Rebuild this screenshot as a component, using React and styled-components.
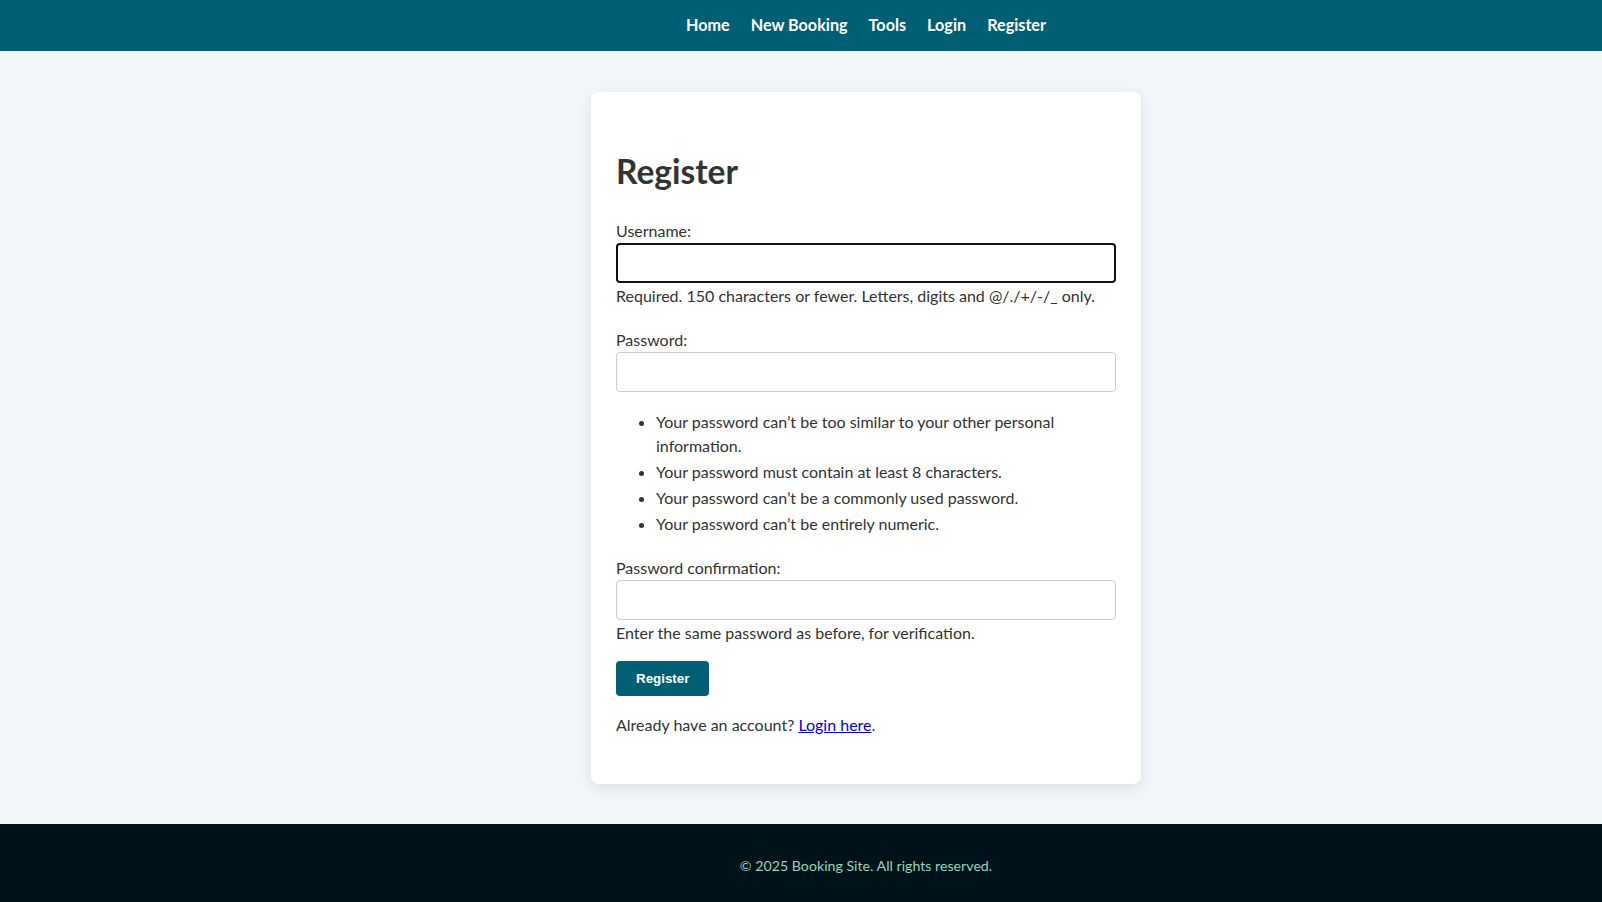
import styled, { createGlobalStyle } from 'styled-components';

const NAV_LINKS = ['Home', 'New Booking', 'Tools', 'Login', 'Register'];

const PASSWORD_RULES = [
  'Your password can’t be too similar to your other personal information.',
  'Your password must contain at least 8 characters.',
  'Your password can’t be a commonly used password.',
  'Your password can’t be entirely numeric.',
];

const GlobalStyle = createGlobalStyle`
  * {
    box-sizing: border-box;
  }

  body {
    margin: 0;
    background: #f3f6f9;
    font-family: Lato, "Open Sans", sans-serif;
    color: #333333;
  }
`;

export default function App() {
  return (
    <>
      <GlobalStyle />
      <Header>
        <Nav>
          {NAV_LINKS.map((link) => (
            <NavLink key={link} href="#">
              {link}
            </NavLink>
          ))}
        </Nav>
      </Header>

      <Main>
        <Card>
          <Title>Register</Title>

          <Field>
            <Label htmlFor="id_username">Username:</Label>
            <Input id="id_username" type="text" autoFocus $active />
            <HelpText>
              Required. 150 characters or fewer. Letters, digits and @/./+/-/_
              only.
            </HelpText>
          </Field>

          <Field>
            <Label htmlFor="id_password1">Password:</Label>
            <Input id="id_password1" type="password" />
            <RuleList>
              {PASSWORD_RULES.map((rule) => (
                <li key={rule}>{rule}</li>
              ))}
            </RuleList>
          </Field>

          <Field $last>
            <Label htmlFor="id_password2">Password confirmation:</Label>
            <Input id="id_password2" type="password" />
            <HelpText>Enter the same password as before, for verification.</HelpText>
          </Field>

          <SubmitButton type="submit">Register</SubmitButton>

          <LoginNote>
            Already have an account? <a href="#">Login here</a>.
          </LoginNote>
        </Card>
      </Main>

      <Footer>
        <p>© 2025 Booking Site. All rights reserved.</p>
      </Footer>
    </>
  );
}

const Header = styled.header`
  background: #005f73;
  height: 51px;
  padding-left: 130px;
`;

const Nav = styled.nav`
  height: 100%;
  display: flex;
  align-items: center;
  justify-content: center;
  gap: 21px;
  padding-bottom: 2px;
`;

const NavLink = styled.a`
  color: #ffffff;
  font-size: 16.2px;
  font-weight: 700;
  text-decoration: none;
`;

const Main = styled.main`
  display: flex;
  justify-content: center;
  padding: 41px 0 40px 130px;
`;

const Card = styled.section`
  width: 550px;
  background: #ffffff;
  border-radius: 8px;
  padding: 25px 25px 47px;
  box-shadow: 0 4px 14px rgba(0, 0, 0, 0.09);
`;

const Title = styled.h2`
  font-size: 33.5px;
  font-weight: 700;
  line-height: 1.2;
  color: #333333;
  margin: 34px 0 28px;
`;

const Field = styled.div`
  margin-bottom: ${({ $last }) => ($last ? '16px' : '20px')};
`;

const Label = styled.label`
  display: block;
  font-size: 16px;
  line-height: 24px;
  color: #333333;
`;

const Input = styled.input`
  display: block;
  width: 100%;
  height: 40px;
  padding: 0 10px;
  font-family: inherit;
  font-size: 16px;
  background: #ffffff;
  border: ${({ $active }) => ($active ? '2px solid #111111' : '1px solid #cccccc')};
  border-radius: 4px;
  outline: none;
  caret-color: #000000;
`;

const HelpText = styled.div`
  margin-top: 1px;
  font-size: 16px;
  line-height: 24px;
  color: #333333;
`;

const RuleList = styled.ul`
  margin: 18px 0 0;
  padding-left: 40px;
  font-size: 16px;
  line-height: 24px;

  li {
    margin-bottom: 2px;
  }
`;

const SubmitButton = styled.button`
  display: block;
  padding: 10px 20px;
  border: none;
  border-radius: 4px;
  background: #005f73;
  color: #ffffff;
  font-family: "Liberation Sans", Arial, sans-serif;
  font-size: 13.33px;
  font-weight: 700;
  cursor: pointer;
`;

const LoginNote = styled.p`
  margin: 17px 0 0;
  font-size: 16px;
  line-height: 24px;

  a {
    color: #0000ee;
  }
`;

const Footer = styled.footer`
  background: #001219;
  padding: 30px 0 30px 130px;
  text-align: center;

  p {
    margin: 0;
    font-size: 14.2px;
    line-height: 24px;
    color: #94d2bd;
  }
`;
